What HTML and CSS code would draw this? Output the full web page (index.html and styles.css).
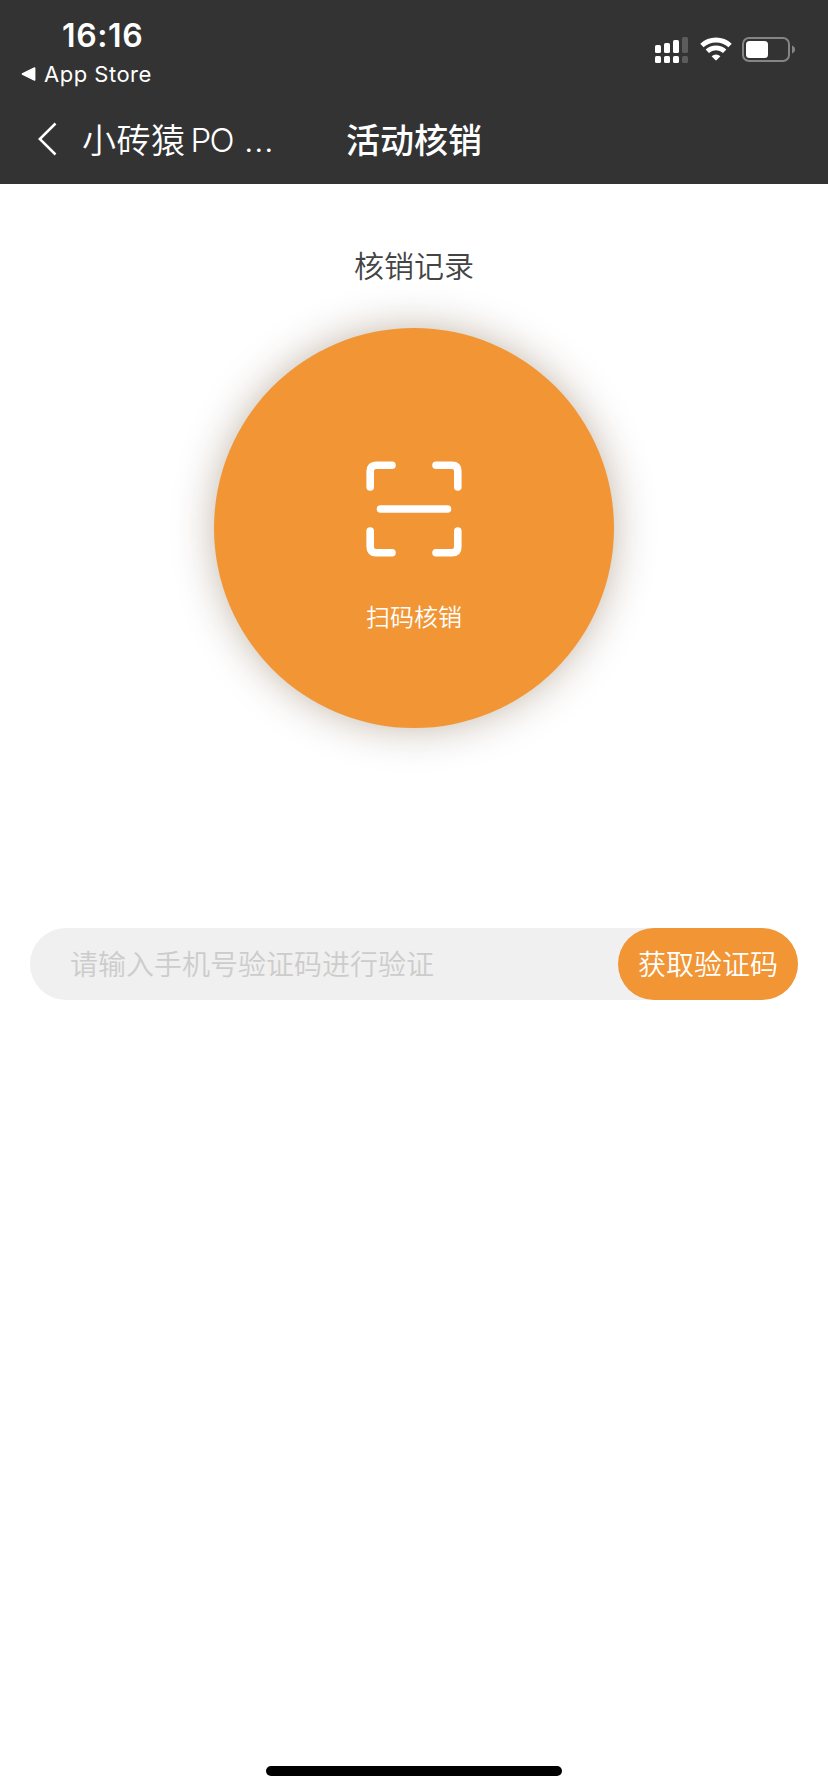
FILE: index.html
```html
<!DOCTYPE html>
<html lang="zh-CN">
<head>
<meta charset="utf-8">
<title>活动核销</title>
<link rel="stylesheet" href="styles.css">
</head>
<body>
<div class="screen">
  <header class="header">
    <div class="status-bar">
      <div class="status-left">
        <div class="time">16:16</div>
        <div class="return-link">
          <svg class="return-arrow" width="15" height="14" viewBox="0 0 15 14"><path d="M13.600 1V13L1.400 7Z" fill="#fff" stroke="#fff" stroke-width="1.6" stroke-linejoin="round"/></svg>
          <span>App Store</span>
        </div>
      </div>
      <div class="status-right">
        <svg class="signal" width="33" height="26" viewBox="0 0 33 26">
          <g fill="#fff">
            <rect x="0" y="8" width="6" height="8" rx="1.6"/>
            <rect x="9" y="6" width="6" height="10" rx="1.6"/>
            <rect x="18" y="3" width="6" height="13" rx="1.6"/>
            <rect x="0" y="19" width="6" height="7" rx="1.6"/>
            <rect x="9" y="19" width="6" height="7" rx="1.6"/>
            <rect x="18" y="19" width="6" height="7" rx="1.6"/>
          </g>
          <g fill="#5c5c5c">
            <rect x="27" y="0" width="6" height="16" rx="1.6"/>
            <rect x="27" y="19" width="6" height="7" rx="1.6"/>
          </g>
        </svg>
        <svg class="wifi" width="32" height="24" viewBox="0 0 32 24">
          <g fill="none" stroke="#fff" stroke-width="4.8">
            <path d="M1.9 8.6A20.5 20.5 0 0 1 30.1 8.6"/>
            <path d="M7.3 14.300A12.500 12.500 0 0 1 24.700 14.300"/>
          </g>
          <path d="M11.6 19.2A6.4 6.4 0 0 1 20.4 19.2L16.7 23.1Q16 23.7 15.3 23.1Z" fill="#fff"/>
        </svg>
        <svg class="battery" width="53" height="25" viewBox="0 0 53 25">
          <rect x="1" y="1" width="46" height="23" rx="6" fill="none" stroke="#858585" stroke-width="2"/>
          <rect x="4" y="4" width="22" height="17" rx="3.5" fill="#fff"/>
          <path d="M50 8.5Q53 9.7 53 12.5T50 16.5Z" fill="#858585"/>
        </svg>
      </div>
    </div>
    <nav class="nav-bar">
      <a class="back">
        <svg width="20" height="34" viewBox="0 0 20 34"><path d="M17.500 1.500L1.800 17L17.500 32.500" fill="none" stroke="#fff" stroke-width="2.5"/></svg>
        <span class="back-name">小砖猿</span><span class="back-latin">PO</span><span class="back-more">...</span>
      </a>
      <h1 class="title">活动核销</h1>
    </nav>
  </header>
  <main class="content">
    <a class="records">核销记录</a>
    <button class="scan">
      <svg width="96" height="96" viewBox="0 0 96 96" fill="none" stroke="#fff" stroke-width="7.600" stroke-linecap="round">
        <path d="M4.200 26V10Q4.200 4.200 10 4.200H26"/>
        <path d="M70 4.200H86Q91.800 4.200 91.800 10V26"/>
        <path d="M91.800 70V86Q91.800 91.800 86 91.800H70"/>
        <path d="M26 91.800H10Q4.200 91.800 4.200 86V70"/>
        <path d="M14.500 48H81.500"/>
      </svg>
      <span>扫码核销</span>
    </button>
    <div class="code-row">
      <span class="placeholder">请输入手机号验证码进行验证</span>
      <button class="get-code">获取验证码</button>
    </div>
  </main>
  <footer class="home-area"><div class="home-indicator"></div></footer>
</div>
</body>
</html>
```
FILE: styles.css
```css
* { box-sizing: border-box; }

body {
  margin: 0;
  background: #fff;
  font-family: "Noto Sans CJK SC", sans-serif;
}

.screen {
  display: flex;
  flex-direction: column;
  width: 828px;
  height: 1792px;
}

.header {
  height: 184px;
  background: #333;
  color: #fff;
}

.status-bar {
  display: flex;
  justify-content: space-between;
  height: 96px;
  padding: 16px 34px 0 21px;
  font-family: Inter, sans-serif;
}

.time {
  height: 40px;
  padding-left: 41px;
  font-size: 32px;
  font-weight: 600;
  letter-spacing: 0.6px;
  line-height: 40px;
}

.return-link {
  display: flex;
  align-items: center;
  gap: 8px;
  height: 36px;
  font-size: 22px;
  font-weight: 400;
  letter-spacing: 0.5px;
  line-height: 36px;
}

.status-right {
  display: flex;
  align-items: flex-start;
  padding-top: 21px;
}

.wifi { margin-left: 12px; }
.battery { margin: 0 -1px 0 10px; }

.nav-bar {
  display: grid;
  grid-template-columns: 1fr auto 1fr;
  align-items: center;
  height: 88px;
  padding: 0 38px 2px;
}

.back {
  display: flex;
  align-items: center;
  font-size: 34px;
  font-weight: 350;
  line-height: 48px;
  white-space: nowrap;
}

.back-name { margin-left: 24px; letter-spacing: 0.5px; }

.back-latin {
  margin-left: 5px;
  padding-top: 2px;
  font-family: Inter, sans-serif;
  font-size: 33px;
  letter-spacing: -1.6px;
}

.back-more {
  margin-left: 11px;
  padding-top: 2px;
  font-family: Inter, sans-serif;
  font-weight: 300;
  letter-spacing: 0.4px;
}

.title {
  margin: 0;
  font-size: 34px;
  font-weight: 500;
  line-height: 48px;
}

.content {
  display: flex;
  flex: 1;
  flex-direction: column;
  align-items: center;
  padding: 59px 30px 0;
}

.records {
  color: #444;
  font-size: 30px;
  font-weight: 350;
  line-height: 42px;
}

button {
  padding: 0;
  border: 0;
  color: #fff;
  font-family: inherit;
  background: #f19535;
}

.scan {
  display: flex;
  flex-direction: column;
  align-items: center;
  gap: 42px;
  width: 400px;
  height: 400px;
  margin-top: 43px;
  padding-top: 133px;
  border-radius: 50%;
  box-shadow: 0 0 40px rgba(80, 40, 0, 0.34);
  font-size: 24px;
  font-weight: 350;
  line-height: 34px;
}

.code-row {
  display: flex;
  align-items: center;
  justify-content: space-between;
  width: 768px;
  height: 72px;
  margin-top: 200px;
  padding-left: 40px;
  border-radius: 36px;
  background: #f0f0f0;
}

.placeholder {
  padding-bottom: 2px;
  color: #ccc;
  font-size: 28px;
  font-weight: 350;
  line-height: 40px;
}

.get-code {
  width: 180px;
  height: 72px;
  padding-bottom: 2px;
  border-radius: 36px;
  font-size: 28px;
  font-weight: 350;
}

.home-area {
  display: flex;
  justify-content: center;
  height: 26px;
}

.home-indicator {
  width: 296px;
  height: 10px;
  border-radius: 5px;
  background: #000;
}
```
